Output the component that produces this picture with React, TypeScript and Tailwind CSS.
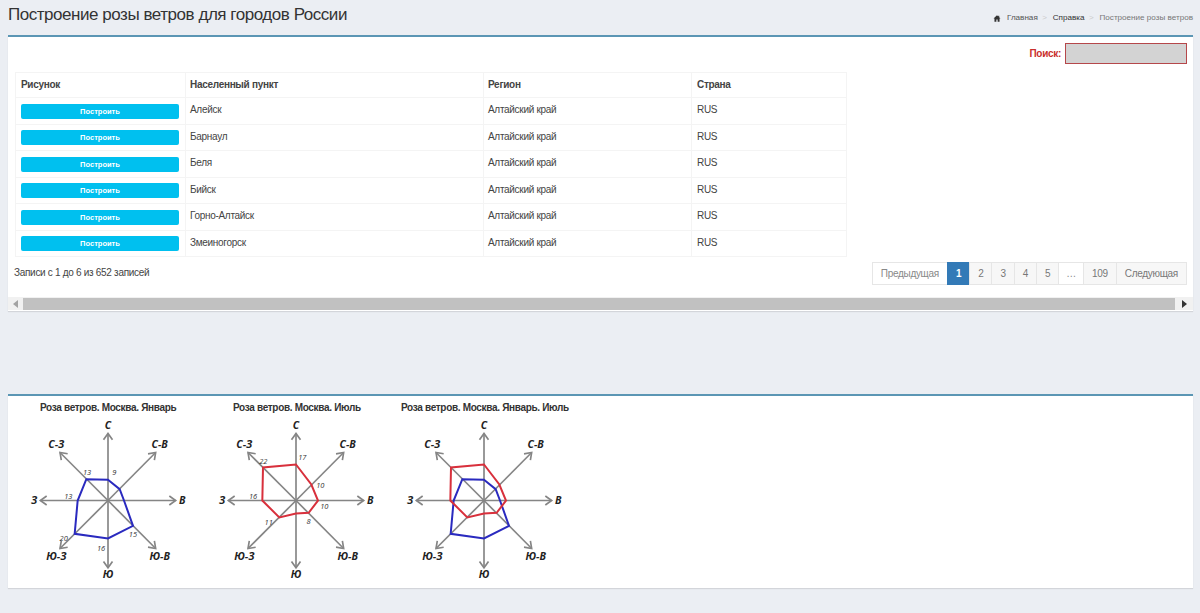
import React from "react";

const rows = ["Алейск", "Барнаул", "Беля", "Бийск", "Горно-Алтайск", "Змеиногорск"];

type P = [number, number];
const jan: P[] = [[0, -62], [35, -34], [48, 0], [75, 76], [0, 114], [-100, 100], [-91, 0], [-65, -64]];
const jul: P[] = [[0, -108], [46, -48], [66, 0], [38, 37], [0, 39], [-50, 51], [-101, 0], [-99, -99]];

const dirLabels: [string, number, number][] = [
  ["С", 0, -224],
  ["С-В", 155, -168],
  ["В", 223, 0],
  ["Ю-В", 155, 168],
  ["Ю", 0, 222],
  ["Ю-З", -155, 168],
  ["З", -222, 0],
  ["С-З", -155, -168],
];

const tips: P[] = [[0, -201], [143, -144], [203, 0], [143, 144], [0, 202], [-144, 144], [-203, 0], [-144, -144]];

function Rose({ width, cx, series, values }: { width: number; cx: number; series: { pts: P[]; color: string }[]; values: [string, number, number][] }) {
  const cy = 86.5;
  return (
    <div className="flex flex-col items-center" style={{ width }}>
      <svg width={width} height={172} viewBox={`0 0 ${width} 172`} className="block">
        <g transform={`translate(${cx} ${cy}) scale(0.3333)`}>
          {tips.map(([x, y], i) => {
            const len = Math.hypot(x, y);
            const ux = x / len;
            const uy = y / len;
            const a = 19;
            const w = 13.5;
            const lx = x - ux * a - uy * w;
            const ly = y - uy * a + ux * w;
            const rx = x - ux * a + uy * w;
            const ry = y - uy * a - ux * w;
            return (
              <g key={i} stroke="#858585" strokeWidth={5} fill="none">
                <line x1={0} y1={0} x2={x} y2={y} />
                <polyline points={`${lx},${ly} ${x},${y} ${rx},${ry}`} />
              </g>
            );
          })}
          {series.map((s) => (
            <polygon key={s.color} points={s.pts.map((p) => p.join(",")).join(" ")} fill="none" stroke={s.color} strokeWidth={6} />
          ))}
        </g>
        <g transform={`translate(${cx} ${cy})`} fontFamily="'Open Sans', sans-serif" fontStyle="italic" textAnchor="middle">
          {dirLabels.map(([t, x, y]) => (
            <text key={t} x={x / 3} y={y / 3 + 3} fontSize={10.5} fontWeight={700} fill="#222">{t}</text>
          ))}
          {values.map(([t, x, y], i) => (
            <text key={i} x={x / 3} y={y / 3 + 3} fontSize={7.5} fill="#333">{t}</text>
          ))}
        </g>
      </svg>
    </div>
  );
}

function PageBtn({ children, active, muted, narrow }: { children: React.ReactNode; active?: boolean; muted?: boolean; narrow?: boolean }) {
  return (
    <span className={`flex h-[23px] items-center border text-[10px] tracking-[-0.3px] -ml-px ${narrow ? "px-[7px]" : "px-2"} ${active ? "border-[#337ab7] bg-[#337ab7] font-bold text-white" : muted ? "border-[#e6e6e6] bg-white text-[#888]" : "border-[#e6e6e6] bg-[#f7f7f7] text-[#777]"}`}>
      {children}
    </span>
  );
}

export default function App() {
  return (
    <div className="h-[613px] overflow-hidden bg-[#ebeef3] font-['Liberation_Sans',sans-serif] text-[#444]">
      <div className="flex h-[35px] items-start justify-between pl-2 pr-[7px]">
        <h1 className="pt-[5px] text-[17px] leading-5 tracking-[-0.46px] text-[#333]">Построение розы ветров для городов России</h1>
        <div className="flex items-center pt-[12px] text-[8.1px] leading-3">
          <svg width="8" height="7" viewBox="0 0 24 22" fill="#333" className="mr-[6px]"><path d="M12 1 1 11h3v10h6v-7h4v7h6V11h3l-4-3.6V2h-3v2.7z" /></svg>
          <span className="text-[#555]">Главная</span>
          <span className="mx-[4.5px] w-[6px] text-[#ccc]">&gt;</span>
          <span className="text-[#333]">Справка</span>
          <span className="mx-[4.5px] w-[6px] text-[#ccc]">&gt;</span>
          <span className="text-[#777]">Построение розы ветров</span>
        </div>
      </div>

      <div className="ml-2 mr-[7px] h-[276px] border-t-2 border-[#5b96b4] bg-white shadow-[0_1px_1px_rgba(0,0,0,0.1)]">
        <div className="flex items-center justify-end pr-[6px] pt-[6px]">
          <span className="mr-1 text-[10px] font-bold tracking-[-0.3px] text-[#c9302c]">Поиск:</span>
          <span className="h-[21px] w-[122px] border border-[#b5474a] bg-[#d3d3d3]" />
        </div>
        <table className="ml-[7px] mt-2 w-[831px] table-fixed border-collapse text-[10px] tracking-[-0.3px]">
          <colgroup>
            <col className="w-[170px]" />
            <col className="w-[298px]" />
            <col className="w-[208px]" />
            <col className="w-[155px]" />
          </colgroup>
          <thead>
            <tr className="h-[25px] font-bold">
              <th className="border border-[#f4f4f4] px-[5px] pb-[2px] text-left font-bold">Рисунок</th>
              <th className="border border-[#f4f4f4] pb-[2px] pl-[4px] text-left font-bold">Населенный пункт</th>
              <th className="border border-[#f4f4f4] pb-[2px] pl-[4px] text-left font-bold">Регион</th>
              <th className="border border-[#f4f4f4] px-[5px] pb-[2px] text-left font-bold">Страна</th>
            </tr>
          </thead>
          <tbody>
            {rows.map((r) => (
              <tr key={r} className="h-[26.5px]">
                <td className="border border-[#f4f4f4] px-[5px]">
                  <button className="mt-[1px] block h-[15px] w-[158px] rounded-[2px] bg-[#00c0ef] text-center text-[7.5px] font-bold leading-[15px] tracking-normal text-white">Построить</button>
                </td>
                <td className="border border-[#f4f4f4] pb-[2px] pl-[4px]">{r}</td>
                <td className="border border-[#f4f4f4] pb-[2px] pl-[4px]">Алтайский край</td>
                <td className="border border-[#f4f4f4] px-[5px] pb-[2px]">RUS</td>
              </tr>
            ))}
          </tbody>
        </table>
        <div className="flex items-start justify-between pl-[6px] pr-[6px] pt-[5px]">
          <span className="pt-[3px] text-[10px] tracking-[-0.3px]">Записи с 1 до 6 из 652 записей</span>
          <div className="flex">
            <PageBtn muted>Предыдущая</PageBtn>
            <PageBtn active>1</PageBtn>
            <PageBtn>2</PageBtn>
            <PageBtn>3</PageBtn>
            <PageBtn>4</PageBtn>
            <PageBtn>5</PageBtn>
            <PageBtn muted narrow>…</PageBtn>
            <PageBtn>109</PageBtn>
            <PageBtn>Следующая</PageBtn>
          </div>
        </div>
        <div className="mt-3 flex h-[13px] items-center bg-[#f1f1f1]">
          <span className="flex w-[15px] justify-center">
            <span className="h-0 w-0 border-y-[4px] border-r-[5px] border-y-transparent border-r-[#a3a3a3]" />
          </span>
          <span className="h-[12px] flex-1 bg-[#c1c1c1]" />
          <span className="flex w-[18px] justify-center">
            <span className="h-0 w-0 border-y-[4px] border-l-[5px] border-y-transparent border-l-[#333]" />
          </span>
        </div>
      </div>

      <div className="ml-2 mr-[7px] mt-[83px] h-[194px] border-t-2 border-[#5b96b4] bg-white shadow-[0_1px_1px_rgba(0,0,0,0.1)]">
        <div className="flex pl-[12px] pt-[6px] text-[10px] font-bold leading-3 tracking-[-0.32px] text-[#333]">
          <div className="w-[188px] pl-[20px]">Роза ветров. Москва. Январь</div>
          <div className="w-[188px] pl-[25px]">Роза ветров. Москва. Июль</div>
          <div className="pl-[5px]">Роза ветров. Москва. Январь. Июль</div>
        </div>
        <div className="flex pl-[12px]">
          <Rose width={188} cx={88} series={[{ pts: jan, color: "#2a2abf" }]} values={[["9", 19, -87], ["13", -63, -85], ["13", -119, -14], ["20", -133, 112], ["16", -21, 142], ["15", 75, 100]]} />
          <Rose width={188} cx={88} series={[{ pts: jul, color: "#d8303c" }]} values={[["17", 19, -132], ["22", -98, -118], ["10", 73, -48], ["16", -129, -14], ["10", 85, 15], ["8", 38, 61], ["11", -82, 63]]} />
          <Rose width={188} cx={88} series={[{ pts: jan, color: "#2a2abf" }, { pts: jul, color: "#d8303c" }]} values={[]} />
        </div>
      </div>
    </div>
  );
}
